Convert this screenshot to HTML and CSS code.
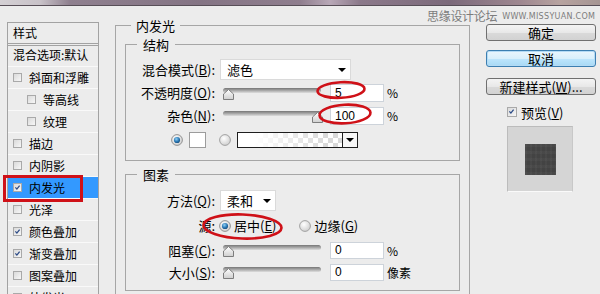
FILE: index.html
```html
<!DOCTYPE html>
<html>
<head>
<meta charset="utf-8">
<link rel="stylesheet" href="styles.css">
</head>
<body>
<div class="titlebar"></div>
<div class="dialog">
  <div class="styles-list">
    <div class="list-head">样式</div>
    <div class="list-item blend">混合选项:默认</div>
    <div class="list-item"><span class="cb"></span>斜面和浮雕</div>
    <div class="list-item sub"><span class="cb"></span>等高线</div>
    <div class="list-item sub"><span class="cb"></span>纹理</div>
    <div class="list-item"><span class="cb"></span>描边</div>
    <div class="list-item"><span class="cb"></span>内阴影</div>
    <div class="list-item selected"><span class="cb"><svg viewBox="0 0 9 9"><path d="M1.8 4.4 L3.7 6.6 L7.2 2" /></svg></span>内发光</div>
    <div class="list-item"><span class="cb"></span>光泽</div>
    <div class="list-item"><span class="cb"><svg viewBox="0 0 9 9"><path d="M1.8 4.4 L3.7 6.6 L7.2 2" /></svg></span>颜色叠加</div>
    <div class="list-item"><span class="cb"><svg viewBox="0 0 9 9"><path d="M1.8 4.4 L3.7 6.6 L7.2 2" /></svg></span>渐变叠加</div>
    <div class="list-item"><span class="cb"></span>图案叠加</div>
    <div class="list-item"><span class="cb"></span>外发光</div>
  </div>

  <div class="group outer">
    <div class="group-title outer-title">内发光</div>

    <div class="group inner struct">
      <div class="group-title inner-title">结构</div>
      <div class="rows">
        <div class="row">
          <span class="lbl">混合模式(<u>B</u>):</span>
          <div class="select wide"><span>滤色</span><i class="arrow"></i></div>
        </div>
        <div class="row">
          <span class="lbl">不透明度(<u>O</u>):</span>
          <div class="slider"><div class="track"></div><svg class="thumb" style="left:3px" viewBox="0 0 11 11"><defs><linearGradient id="tg" x1="0" y1="0" x2="0" y2="1"><stop offset="0" stop-color="#ffffff"/><stop offset="1" stop-color="#cfcfcf"/></linearGradient></defs><path d="M0.5 10.5 V5 L5.5 0.5 L10.5 5 V10.5 Z" fill="url(#tg)" stroke="#7d7d7d"/></svg></div>
          <div class="num">5</div><span class="unit">%</span>
        </div>
        <div class="row">
          <span class="lbl">杂色(<u>N</u>):</span>
          <div class="slider"><div class="track"></div><svg class="thumb" style="left:92px" viewBox="0 0 11 11"><path d="M0.5 10.5 V5 L5.5 0.5 L10.5 5 V10.5 Z" fill="url(#tg)" stroke="#7d7d7d"/></svg></div>
          <div class="num">100</div><span class="unit">%</span>
        </div>
        <div class="row color-row">
          <svg class="radio" viewBox="0 0 12 12"><defs><radialGradient id="rg" cx="0.4" cy="0.35" r="0.7"><stop offset="0" stop-color="#ffffff"/><stop offset="1" stop-color="#cdcdcd"/></radialGradient><radialGradient id="rd" cx="0.4" cy="0.35" r="0.7"><stop offset="0" stop-color="#8fd0f6"/><stop offset="0.6" stop-color="#2a78b4"/><stop offset="1" stop-color="#154a78"/></radialGradient></defs><circle cx="6" cy="6" r="5.4" fill="url(#rg)" stroke="#8a8a8a" stroke-width="0.9"/><circle cx="6" cy="6" r="3.1" fill="url(#rd)"/></svg>
          <div class="swatch"></div>
          <svg class="radio r2" viewBox="0 0 12 12"><circle cx="6" cy="6" r="5.4" fill="url(#rg)" stroke="#9a9a9a" stroke-width="0.9"/></svg>
          <div class="gradbox"></div><div class="gradbtn"><i class="arrow"></i></div>
        </div>
      </div>
    </div>

    <div class="group inner elems">
      <div class="group-title inner-title">图素</div>
      <div class="rows">
        <div class="row">
          <span class="lbl">方法(<u>Q</u>):</span>
          <div class="select narrow"><span>柔和</span><i class="arrow"></i></div>
        </div>
        <div class="row src-row">
          <span class="lbl src-lbl">源:</span>
          <svg class="radio" viewBox="0 0 12 12"><circle cx="6" cy="6" r="5.4" fill="url(#rg)" stroke="#8a8a8a" stroke-width="0.9"/><circle cx="6" cy="6" r="3.1" fill="url(#rd)"/></svg>
          <span class="opt">居中(<u>E</u>)</span>
          <svg class="radio r3" viewBox="0 0 12 12"><circle cx="6" cy="6" r="5.4" fill="url(#rg)" stroke="#9a9a9a" stroke-width="0.9"/></svg>
          <span class="opt">边缘(<u>G</u>)</span>
        </div>
        <div class="row short">
          <span class="lbl">阻塞(<u>C</u>):</span>
          <div class="slider"><div class="track"></div><svg class="thumb" style="left:3px" viewBox="0 0 11 11"><path d="M0.5 10.5 V5 L5.5 0.5 L10.5 5 V10.5 Z" fill="url(#tg)" stroke="#7d7d7d"/></svg></div>
          <div class="num small">0</div><span class="unit">%</span>
        </div>
        <div class="row short">
          <span class="lbl">大小(<u>S</u>):</span>
          <div class="slider"><div class="track"></div><svg class="thumb" style="left:3px" viewBox="0 0 11 11"><path d="M0.5 10.5 V5 L5.5 0.5 L10.5 5 V10.5 Z" fill="url(#tg)" stroke="#7d7d7d"/></svg></div>
          <div class="num small">0</div><span class="unit">像素</span>
        </div>
      </div>
    </div>
  </div>

  <div class="side">
    <div class="btn">确定</div>
    <div class="btn focus">取消</div>
    <div class="btn">新建样式(<u>W</u>)...</div>
    <div class="preview-check"><span class="cb"><svg viewBox="0 0 9 9"><path d="M1.8 4.4 L3.7 6.6 L7.2 2" /></svg></span>预览(<u>V</u>)</div>
    <div class="preview"><div class="preview-fill"></div></div>
  </div>
</div>

<div class="watermark"><span class="wm-cn">思缘设计论坛</span><span class="wm-en">WWW.MISSYUAN.COM</span></div>

<svg class="marks" viewBox="0 0 600 294" width="600" height="294">
  <rect x="4.5" y="176.5" width="77" height="24" fill="none" stroke="#cf1118" stroke-width="3"/>
  <ellipse cx="341" cy="90" rx="23.5" ry="7.8" fill="none" stroke="#cf1118" stroke-width="2.6" transform="rotate(-3 341 90)"/>
  <ellipse cx="345" cy="114" rx="25.5" ry="9.3" fill="none" stroke="#cf1118" stroke-width="2.6" transform="rotate(-3 345 114)"/>
  <ellipse cx="242.5" cy="226.5" rx="39" ry="12" fill="none" stroke="#cf1118" stroke-width="2.6" transform="rotate(2 242.5 226.5)"/>
</svg>
</body>
</html>
```
FILE: styles.css
```css
* { box-sizing: border-box; }
html, body { margin: 0; padding: 0; }
body {
  width: 600px; height: 294px; overflow: hidden; position: relative;
  background: #ececec; color: #000;
  font-family: "Noto Sans CJK SC", "Noto Sans", sans-serif; font-size: 12px;
}
u { text-decoration: underline; text-underline-offset: 1px; }

.titlebar {
  height: 6px; border-bottom: 1px solid #574e57;
  background: linear-gradient(90deg, #d4d0d4 0, #c8c2c8 40px, #8f808f 70px, #847484 200px, #8f7e8e 300px, #b8a8b7 330px, #8b798a 360px, #7c6a7b 450px, #9e8790 520px, #b7a3a0 560px, #a59593 600px);
}

.dialog { display: flex; align-items: flex-start; padding: 16px 0 0 7px; }

/* left list */
.styles-list {
  flex: none; width: 92px; height: 300px;
  border: 1px solid #a2a2a2; border-bottom: 0;
}
.list-head {
  height: 23px; line-height: 20px; padding-left: 5px;
  border-bottom: 3px double #a2a2a2;
}
.list-item {
  height: 22px; display: flex; align-items: center; padding-left: 5px;
  border-bottom: 1px solid #f9f9f9; white-space: nowrap;
}
.list-item.blend { height: 21px; padding-bottom: 3px; }
.list-item.sub { padding-left: 19px; }
.list-item.selected { background: #3399ff; }
.cb {
  flex: none; width: 9px; height: 9px; margin-right: 7px;
  border: 1px solid #a9a9a9;
  background: linear-gradient(135deg, #dadada, #f7f7f7);
  display: inline-flex;
}
.cb svg { width: 7px; height: 7px; margin: 0; }
.cb path { fill: none; stroke: #2b4a86; stroke-width: 1.6; }

/* groups */
.group { border: 1px solid #a6a6a6; }
.group.outer {
  flex: none; width: 355px; height: 290px; margin: 3px 0 0 16px;
  border-bottom: 0; padding: 0 9px;
}
.group-title {
  width: fit-content; background: #ececec; line-height: 15px; font-size: 13px;
  margin-top: -8px;
}
.outer-title { margin-left: 6px; padding: 0 5px; }
.inner-title { margin-left: 11px; padding: 0 6px; }
.group.struct { margin-top: 11px; padding-bottom: 12px; }
.group.struct .rows { margin-top: 6px; }
.group.elems { margin-top: 13px; padding-bottom: 7px; }
.group.elems .rows { margin-top: 7px; }

.row { display: flex; align-items: center; height: 23px; font-size: 13px; }
.row.short { height: 22px; }
.lbl { flex: none; width: 89px; margin-right: 5px; text-align: right; white-space: nowrap; }

.select {
  height: 21px; background: #fff; border: 1px solid #dadada;
  display: flex; align-items: center; justify-content: space-between;
  padding: 0 4px 0 6px;
}
.select.wide { width: 131px; }
.select.narrow { width: 56px; }
.arrow {
  display: block; width: 0; height: 0;
  border-left: 4px solid transparent; border-right: 4px solid transparent;
  border-top: 4px solid #000;
}

.slider { position: relative; flex: none; width: 110px; height: 12px; align-self: flex-start; margin-top: 7px; }
.row.short .slider { margin-top: 6px; }
.track {
  margin-left: 3px; width: 98px; height: 5px; border-radius: 3px;
  background: linear-gradient(#767676, #a8a8a8 50%, #dedede);
}
.thumb { position: absolute; top: 1px; width: 11px; height: 11px; }

.num {
  flex: none; width: 54px; height: 18px; background: #fff;
  border: 1px solid #cdd3da; padding-left: 4px;
  font-family: "Liberation Sans", sans-serif; font-size: 12px; line-height: 16px;
}
.num.small { height: 17px; line-height: 15px; }
.unit { margin-left: 3px; font-size: 12px; }

.color-row { height: 16px; margin-top: 5px; padding-left: 45px; }
.radio { flex: none; width: 12px; height: 12px; }
.swatch { flex: none; width: 17px; height: 16px; margin-left: 6px; background: #fff; border: 1px solid #9c9c9c; }
.radio.r2 { margin-left: 13px; }
.gradbox {
  flex: none; width: 105px; height: 16px; margin-left: 6px;
  border: 1px solid #1e1e1e; border-right: 0;
  background:
    linear-gradient(90deg, #fff 0, #fff 15%, rgba(255,255,255,0) 85%),
    linear-gradient(45deg, #d9d9d9 25%, transparent 25%, transparent 75%, #d9d9d9 75%),
    linear-gradient(45deg, #d9d9d9 25%, #fff 25%, #fff 75%, #d9d9d9 75%);
  background-size: 100% 100%, 10px 10px, 10px 10px;
  background-position: 0 0, 0 0, 5px 5px;
}
.gradbtn {
  flex: none; width: 16px; height: 16px; border: 1px solid #1e1e1e; background: #f7f7f7;
  display: flex; align-items: center; justify-content: center;
}

.src-row { height: 27px; }
.src-lbl { margin-right: 4px; }
.opt { margin-left: 3px; }
.radio.r3 { margin-left: 23px; }

/* right column */
.side { flex: none; width: 110px; margin: 2px 0 0 16px; }
.btn {
  height: 17px; border: 1px solid #707070; border-radius: 3px;
  background: linear-gradient(#f4f4f4, #e8e8e8 50%, #dadada 51%, #d2d2d2);
  text-align: center; font-size: 13px; line-height: 15px; white-space: nowrap;
}
.btn + .btn { margin-top: 9px; }
.btn.focus { border-color: #3c7fb1; background: linear-gradient(#eaf6fd, #d9f0fc 50%, #bee6fd 51%, #a7d9f5); box-shadow: inset 0 0 0 1px #b4dbf5; }
.btn.focus + .btn { margin-top: 11px; }
.preview-check {
  margin-top: 11px; height: 12px; padding-left: 21px;
  display: flex; align-items: center; font-size: 13px;
}
.preview-check .cb { width: 10px; height: 10px; margin-right: 4px; }
.preview {
  margin: 8px 0 0 21px; width: 66px; height: 66px;
  background: #d5d5d5; border: 1px solid #bcbcbc; border-right-color: #c8c8c8; border-bottom-color: #fafafa;
  display: flex; align-items: center; justify-content: center;
}
.preview-fill {
  width: 31px; height: 31px;
  background:
    repeating-linear-gradient(90deg, rgba(255,255,255,0.02) 0 2px, rgba(0,0,0,0.03) 2px 5px),
    repeating-linear-gradient(0deg, rgba(255,255,255,0.02) 0 3px, rgba(0,0,0,0.03) 3px 7px),
    #474747;
}

/* overlays */
.watermark {
  position: absolute; left: 427px; top: 8px; color: #7c7c7c;
  display: flex; align-items: center; white-space: nowrap;
}
.wm-cn { font-size: 12px; line-height: 16px; letter-spacing: -0.3px; }
.wm-en { margin-left: 5px; font-family: "DejaVu Sans", sans-serif; font-size: 8px; letter-spacing: 0.3px; }
.marks { position: absolute; left: 0; top: 0; pointer-events: none; }
```
